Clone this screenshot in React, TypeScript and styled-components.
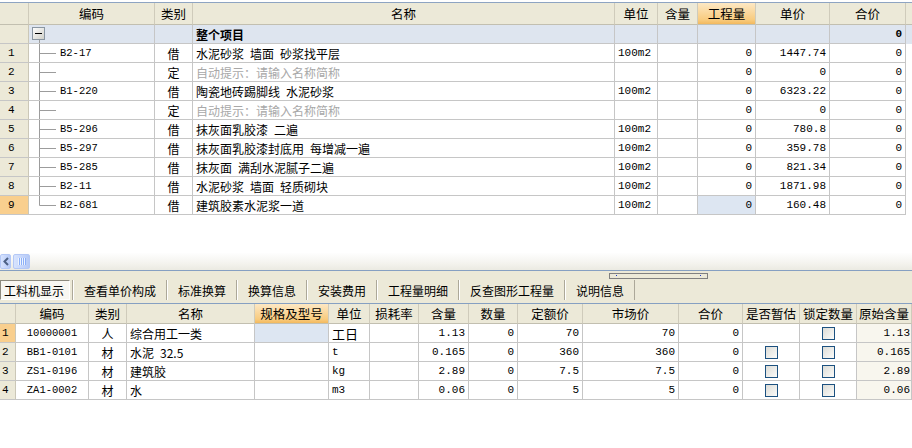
import styled, { createGlobalStyle, css } from "styled-components"

const TOP_COLS = "29px 126px 38px 422px 43px 40px 58px 74px 76px 6px"
const LOW_COLS = "16px 73px 38px 128px 74px 41px 49px 50px 49px 65px 96px 64px 57px 57px 55px"
const GRID_LINE = "#c6c6c6"
const FACE = "#ece9d8"
const MONO = `"Liberation Mono", "DejaVu Sans Mono", monospace`
const SELECTED = "#dde6f2"
const HOT = "#f9cf8e"

const sp = (s: string) => s.replace(/ /g, "\u2002")

const GlobalStyle = createGlobalStyle`
  html, body {
    margin: 0;
    padding: 0;
    background: #fff;
  }
  body {
    font-family: "Noto Sans CJK SC", "Noto Sans", sans-serif;
    font-size: 12px;
    color: #000;
  }
  * {
    box-sizing: border-box;
  }
`

const Page = styled.div`
  width: 912px;
  height: 448px;
  overflow: hidden;
  display: flex;
  flex-direction: column;
  background: #fff;
`

const TopGrid = styled.div`
  margin-top: 2px;
  border-top: 1px solid #8ea4c2;
`

const Row = styled.div<{ $cols: string; $h?: number; $bg?: string }>`
  display: grid;
  grid-template-columns: ${({ $cols }) => $cols};
  height: ${({ $h = 19 }) => $h}px;
  background: ${({ $bg = "#fff" }) => $bg};
`

const HeadCell = styled.div<{ $hot?: boolean; $plain?: boolean }>`
  display: flex;
  align-items: center;
  justify-content: center;
  white-space: nowrap;
  overflow: hidden;
  font-size: 12.5px;
  background: ${({ $hot }) => ($hot ? "linear-gradient(#fde8c4, #f8cb7e 80%, #f3b95e)" : FACE)};
  border-right: ${({ $plain }) => ($plain ? "none" : "1px solid #cfcbbb")};
  border-bottom: 1px solid #c2bfb0;
`

type Align = "left" | "center" | "right"

const Cell = styled.div<{
  $align?: Align
  $mono?: boolean
  $muted?: boolean
  $bold?: boolean
  $bg?: string
  $size?: number
  $pr?: number
  $plain?: boolean
}>`
  display: flex;
  align-items: center;
  justify-content: ${({ $align = "left" }) =>
    $align === "left" ? "flex-start" : $align === "right" ? "flex-end" : "center"};
  padding: 0 ${({ $pr = 3 }) => $pr}px 0 3px;
  min-width: 0;
  overflow: hidden;
  white-space: pre;
  border-right: ${({ $plain }) => ($plain ? "none" : `1px solid ${GRID_LINE}`)};
  border-bottom: ${({ $plain }) => ($plain ? "none" : `1px solid ${GRID_LINE}`)};
  background: ${({ $bg }) => $bg ?? "transparent"};
  color: ${({ $muted }) => ($muted ? "#a8a8a8" : "#000")};
  font-weight: ${({ $bold }) => ($bold ? 700 : 400)};
  font-family: ${({ $mono }) => ($mono ? MONO : "inherit")};
  font-size: ${({ $mono, $size }) => $size ?? ($mono ? 11 : 12)}px;
`

const TreeCell = styled(Cell)`
  padding: 0;
`

const CodeText = styled.span`
  margin-left: 4px;
  font-family: ${MONO};
  font-size: 10.5px;
`

const NumCell = styled.div<{ $hot?: boolean; $inset: number }>`
  display: flex;
  align-items: center;
  padding-left: ${({ $inset }) => $inset}px;
  background: ${({ $hot }) => ($hot ? HOT : FACE)};
  border-right: 1px solid #cbc7b7;
  border-bottom: 1px solid ${GRID_LINE};
  font-family: ${MONO};
  font-size: 11px;
`

const Blank = styled.div`
  height: 38px;
`

const ScrollBar = styled.div`
  height: 17px;
  display: flex;
  align-items: center;
  gap: 2px;
  background: linear-gradient(#fefefe, #f4f3ee 60%, #ebeae2);
`

const ScrollButton = styled.div<{ $w: number }>`
  width: ${({ $w }) => $w}px;
  height: 15px;
  display: flex;
  align-items: center;
  justify-content: center;
  border: 1px solid #b4c8f6;
  border-radius: 2px;
  background: linear-gradient(90deg, #d8e4fe, #c3d4fb 60%, #b5c9f5);
`

const TabBar = styled.div`
  position: relative;
  height: 34px;
  padding-top: 9px;
  display: flex;
  align-items: flex-start;
  background: ${FACE};
  border-top: 1px solid #86a0c2;
  border-bottom: 1px solid #86a0c2;
`

const Splitter = styled.div`
  position: absolute;
  left: 609px;
  top: 2px;
  width: 99px;
  height: 6px;
  border: 1px solid #808080;
  background: ${FACE};
  &::before,
  &::after {
    content: "";
    position: absolute;
    top: 1px;
    width: 1px;
    height: 1px;
    background: #1e3cc8;
  }
  &::before {
    left: 6px;
  }
  &::after {
    right: 6px;
  }
`

const Tab = styled.div<{ $active?: boolean }>`
  height: 20px;
  display: flex;
  align-items: center;
  white-space: nowrap;
  font-size: 12px;
  ${({ $active }) =>
    $active
      ? css`
          width: 70px;
          padding-left: 3px;
          margin-right: 2px;
          background: #f8f7f2;
          border: 1px solid;
          border-color: #8d8a7e #ffffff #ffffff #8d8a7e;
        `
      : css`
          padding: 0 10px 0 11px;
          border-left: 1px solid #aca899;
          box-shadow: inset 1px 0 #ffffff;
          &:last-child {
            border-right: 1px solid #aca899;
          }
        `}
`

const Check = styled.span`
  width: 13px;
  height: 13px;
  border: 1px solid #1c5180;
  background: linear-gradient(135deg, #dcdcd7, #fbfbf9);
`

function Branch({ last }: { last?: boolean }) {
  return (
    <svg width="27" height="18" viewBox="0 0 27 18" style={{ flex: "none" }}>
      <line x1="10.5" y1="0" x2="10.5" y2={last ? 9.5 : 18} stroke="#9c9c9c" />
      <line x1="10.5" y1="9.5" x2="27" y2="9.5" stroke="#9c9c9c" />
    </svg>
  )
}

function Collapse() {
  return (
    <svg width="27" height="18" viewBox="0 0 27 18" style={{ flex: "none" }}>
      <defs>
        <linearGradient id="box" x1="0" y1="0" x2="1" y2="1">
          <stop offset="0" stopColor="#ffffff" />
          <stop offset="1" stopColor="#cfcfc8" />
        </linearGradient>
      </defs>
      <line x1="10.5" y1="15" x2="10.5" y2="18" stroke="#9c9c9c" />
      <rect x="3.5" y="2.5" width="12" height="12" fill="url(#box)" stroke="#8a96a2" />
      <line x1="6" y1="8.5" x2="13" y2="8.5" stroke="#000" />
    </svg>
  )
}

function ChevronLeft() {
  return (
    <svg width="6" height="9" viewBox="0 0 6 9">
      <path d="M5 1 L1.5 4.5 L5 8" fill="none" stroke="#4d6185" strokeWidth="2" />
    </svg>
  )
}

function Grip() {
  return (
    <svg width="8" height="7" viewBox="0 0 8 7">
      {[0.5, 2.5, 4.5, 6.5].map((x) => (
        <line key={x} x1={x} y1="0" x2={x} y2="7" stroke="#eef4fe" />
      ))}
      {[1.5, 3.5, 5.5, 7.5].map((x) => (
        <line key={x} x1={x} y1="0" x2={x} y2="7" stroke="#8cb0f8" />
      ))}
    </svg>
  )
}

type Item = {
  code: string
  kind: string
  name: string
  unit: string
  price: string
}

const items: Item[] = [
  { code: "B2-17", kind: "借", name: "水泥砂浆 墙面 砂浆找平层", unit: "100m2", price: "1447.74" },
  { code: "", kind: "定", name: "", unit: "", price: "0" },
  { code: "B1-220", kind: "借", name: "陶瓷地砖踢脚线 水泥砂浆", unit: "100m2", price: "6323.22" },
  { code: "", kind: "定", name: "", unit: "", price: "0" },
  { code: "B5-296", kind: "借", name: "抹灰面乳胶漆 二遍", unit: "100m2", price: "780.8" },
  { code: "B5-297", kind: "借", name: "抹灰面乳胶漆封底用 每增减一遍", unit: "100m2", price: "359.78" },
  { code: "B5-285", kind: "借", name: "抹灰面 满刮水泥腻子二遍", unit: "100m2", price: "821.34" },
  { code: "B2-11", kind: "借", name: "水泥砂浆 墙面 轻质砌块", unit: "100m2", price: "1871.98" },
  { code: "B2-681", kind: "借", name: "建筑胶素水泥浆一道", unit: "100m2", price: "160.48" },
]

type Part = {
  code: string
  kind: string
  name: string
  unit: string
  amount: string
  quota: string
  estimate: boolean
}

const parts: Part[] = [
  { code: "10000001", kind: "人", name: "综合用工一类", unit: "工日", amount: "1.13", quota: "70", estimate: false },
  { code: "BB1-0101", kind: "材", name: "水泥 32.5", unit: "t", amount: "0.165", quota: "360", estimate: true },
  { code: "ZS1-0196", kind: "材", name: "建筑胶", unit: "kg", amount: "2.89", quota: "7.5", estimate: true },
  { code: "ZA1-0002", kind: "材", name: "水", unit: "m3", amount: "0.06", quota: "5", estimate: true },
]

const topHeads = ["编码", "类别", "名称", "单位", "含量", "工程量", "单价", "合价"]
const lowHeads = ["编码", "类别", "名称", "规格及型号", "单位", "损耗率", "含量", "数量", "定额价", "市场价", "合价", "是否暂估", "锁定数量", "原始含量"]

export default function App() {
  return (
    <>
      <GlobalStyle />
      <Page>
        <TopGrid>
          <Row $cols={TOP_COLS} $h={22}>
            <HeadCell />
            {topHeads.map((h) => (
              <HeadCell key={h} $hot={h === "工程量"}>
                {h}
              </HeadCell>
            ))}
            <HeadCell $plain />
          </Row>

          <Row $cols={TOP_COLS} $bg="#dee5ef">
            <NumCell $inset={8} />
            <TreeCell>
              <Collapse />
            </TreeCell>
            <Cell />
            <Cell $bold>整个项目</Cell>
            <Cell />
            <Cell />
            <Cell />
            <Cell />
            <Cell $align="right" $mono $bold>
              0
            </Cell>
            <Cell $plain />
          </Row>

          {items.map((it, i) => {
            const last = i === items.length - 1
            return (
              <Row key={i} $cols={TOP_COLS}>
                <NumCell $inset={8} $hot={last}>
                  {i + 1}
                </NumCell>
                <TreeCell>
                  <Branch last={last} />
                  {it.code && <CodeText>{it.code}</CodeText>}
                </TreeCell>
                <Cell $align="center">{it.kind}</Cell>
                <Cell $muted={!it.name}>{it.name ? sp(it.name) : "自动提示：请输入名称简称"}</Cell>
                <Cell $mono>{it.unit}</Cell>
                <Cell />
                <Cell $align="right" $mono $bg={last ? SELECTED : undefined}>
                  0
                </Cell>
                <Cell $align="right" $mono>
                  {it.price}
                </Cell>
                <Cell $align="right" $mono>
                  0
                </Cell>
                <Cell $plain />
              </Row>
            )
          })}
        </TopGrid>

        <Blank />

        <ScrollBar>
          <ScrollButton $w={11}>
            <ChevronLeft />
          </ScrollButton>
          <ScrollButton $w={17}>
            <Grip />
          </ScrollButton>
        </ScrollBar>

        <TabBar>
          <Splitter />
          <Tab $active>工料机显示</Tab>
          <Tab>查看单价构成</Tab>
          <Tab>标准换算</Tab>
          <Tab>换算信息</Tab>
          <Tab>安装费用</Tab>
          <Tab>工程量明细</Tab>
          <Tab>反查图形工程量</Tab>
          <Tab>说明信息</Tab>
        </TabBar>

        <div>
          <Row $cols={LOW_COLS} $h={20}>
            <HeadCell />
            {lowHeads.map((h) => (
              <HeadCell key={h} $hot={h === "规格及型号"}>
                {h}
              </HeadCell>
            ))}
          </Row>
          {parts.map((p, i) => (
            <Row key={p.code} $cols={LOW_COLS}>
              <NumCell $inset={2} $hot={i === 0}>
                {i + 1}
              </NumCell>
              <Cell $align="center" $mono $size={10.5}>
                {p.code}
              </Cell>
              <Cell $align="center">{p.kind}</Cell>
              <Cell>{sp(p.name)}</Cell>
              <Cell $bg={i === 0 ? SELECTED : undefined} />
              {p.unit === "工日" ? <Cell $size={13}>{p.unit}</Cell> : <Cell $mono>{p.unit}</Cell>}
              <Cell />
              <Cell $align="right" $mono>
                {p.amount}
              </Cell>
              <Cell $align="right" $mono>
                0
              </Cell>
              <Cell $align="right" $mono>
                {p.quota}
              </Cell>
              <Cell $align="right" $mono>
                {p.quota}
              </Cell>
              <Cell $align="right" $mono>
                0
              </Cell>
              <Cell $align="center">{p.estimate && <Check />}</Cell>
              <Cell $align="center">
                <Check />
              </Cell>
              <Cell $align="right" $mono $pr={1} $bg="#f8f6ee">
                {p.amount}
              </Cell>
            </Row>
          ))}
        </div>
      </Page>
    </>
  )
}
